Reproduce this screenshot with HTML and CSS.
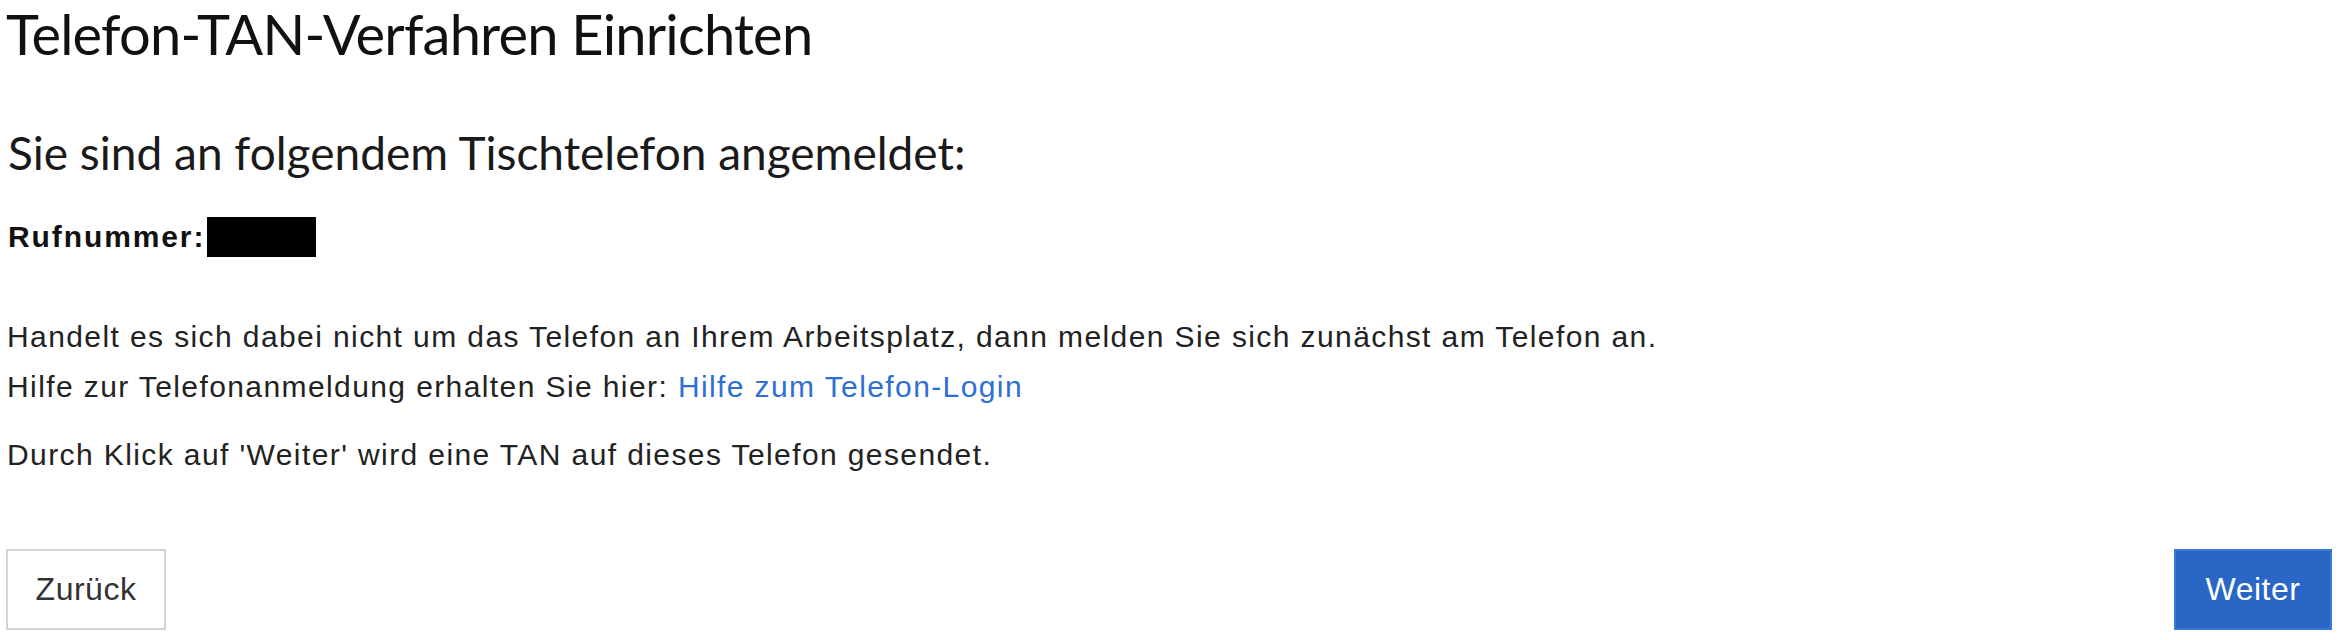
FILE: index.html
```html
<!DOCTYPE html>
<html lang="de">
<head>
    <meta charset="UTF-8">
    <meta name="viewport" content="width=device-width, initial-scale=1.0">
    <title>Telefon-TAN-Verfahren Einrichten</title>
    <link rel="stylesheet" href="styles.css">
</head>
<body>
    <div class="page">
        <h1 class="page-title">Telefon-TAN-Verfahren Einrichten</h1>

        <h2 class="sub-title">Sie sind an folgendem Tischtelefon angemeldet:</h2>

        <!-- Rufnummer ist geschwärzt -->
        <div class="number-row">
            <span class="number-label">Rufnummer:</span>
            <span class="number-redacted"></span>
        </div>

        <p class="info">
            Handelt es sich dabei nicht um das Telefon an Ihrem Arbeitsplatz, dann melden Sie sich zunächst am Telefon an.<br>
            Hilfe zur Telefonanmeldung erhalten Sie hier: <a href="#" class="help-link">Hilfe zum Telefon-Login</a>
        </p>

        <p class="info info-next">Durch Klick auf 'Weiter' wird eine TAN auf dieses Telefon gesendet.</p>

        <div class="actions">
            <button class="btn btn-back">Zurück</button>
            <button class="btn btn-next">Weiter</button>
        </div>
    </div>
</body>
</html>
```

FILE: styles.css
```css
body {
    margin: 0;
    background: #fff;
    color: #222;
    font-family: "Liberation Sans", Arial, sans-serif;
}

.page {
    padding: 0 10px 0 6px;
}

.page-title {
    margin: 0;
    font-family: Lato, "Open Sans", sans-serif;
    font-weight: 400;
    font-size: 56px;
    line-height: normal;
    letter-spacing: -0.8px;
    color: #111;
}

.sub-title {
    margin: 58px 0 0 2px;
    font-family: Lato, "Open Sans", sans-serif;
    font-weight: 400;
    font-size: 46px;
    line-height: normal;
    color: #1a1a1a;
}

.number-row {
    display: flex;
    align-items: center;
    margin: 37px 0 0 2px;
}

.number-label {
    font-weight: bold;
    font-size: 30px;
    letter-spacing: 1.9px;
    color: #111;
}

.number-redacted {
    display: inline-block;
    width: 109px;
    height: 40px;
    margin-left: 2px;
    background: #000;
}

.info {
    margin: 55px 0 0 1px;
    font-size: 30px;
    line-height: 50px;
    letter-spacing: 1.4px;
}

.info-next {
    margin-top: 18px;
}

.help-link {
    color: #2e6fd3;
    text-decoration: none;
}

.actions {
    display: flex;
    justify-content: space-between;
    margin-top: 69px;
}

.btn {
    height: 81px;
    font-family: "Liberation Sans", Arial, sans-serif;
    font-size: 32px;
    letter-spacing: 0.5px;
    cursor: pointer;
}

.btn-back {
    width: 160px;
    background: #fff;
    color: #333;
    border: 2px solid #d3d3d3;
}

.btn-next {
    width: 158px;
    background: #2966c6;
    color: #fff;
    border: 2px solid #3a78d6;
}
```
